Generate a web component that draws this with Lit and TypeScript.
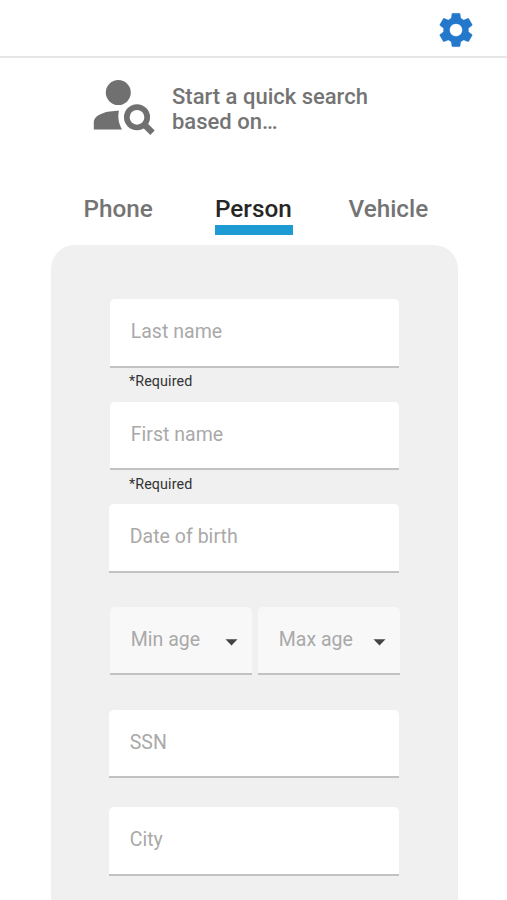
import { LitElement, html, css, svg } from "lit";
import { customElement, property } from "lit/decorators.js";
import { classMap } from "lit/directives/class-map.js";

@customElement("text-field")
class TextField extends LitElement {
  @property() label = "";
  @property() hint = "";
  @property({ type: Boolean }) select = false;

  static styles = css`
    :host { display: block; }
    .box {
      box-sizing: border-box;
      height: 68.5px;
      display: flex;
      align-items: center;
      padding: 0 14px 1px 20.7px;
      background: #fff;
      border-bottom: 2px solid #c2c2c2;
      border-radius: 5px 5px 0 0;
      color: #a9a9a9;
      font-size: 19.5px;
      letter-spacing: 0.03px;
      white-space: nowrap;
    }
    .box.select { background: #f8f8f8; justify-content: space-between; }
    .arrow { width: 13px; height: 7px; margin-top: 6px; fill: #444; }
    .hint {
      margin: 4.5px 0 1px 19px;
      font-size: 14.3px;
      line-height: 18px;
      letter-spacing: 0.1px;
      color: #333;
    }
  `;

  render() {
    return html`
      <div class=${classMap({ box: true, select: this.select })}>
        <span>${this.label}</span>
        ${this.select
          ? html`<svg class="arrow" viewBox="0 0 13 7"><path d="M0.5 0.3h12L6.5 6.5z" /></svg>`
          : ""}
      </div>
      ${this.hint ? html`<div class="hint">${this.hint}</div>` : ""}
    `;
  }
}

const gear = svg`<path d="M19.14 12.94c.04-.3.06-.61.06-.94 0-.32-.02-.64-.07-.94l2.03-1.58c.18-.14.23-.41.12-.61l-1.92-3.32c-.12-.22-.37-.29-.59-.22l-2.39.96c-.5-.38-1.03-.7-1.62-.94l-.36-2.54c-.04-.24-.24-.41-.48-.41h-3.84c-.24 0-.43.17-.47.41l-.36 2.54c-.59.24-1.13.57-1.62.94l-2.39-.96c-.22-.08-.47 0-.59.22L2.74 8.87c-.12.21-.08.47.12.61l2.03 1.58c-.05.3-.09.63-.09.94s.02.64.07.94l-2.03 1.58c-.18.14-.23.41-.12.61l1.92 3.32c.12.22.37.29.59.22l2.39-.96c.5.38 1.03.7 1.62.94l.36 2.54c.05.24.24.41.48.41h3.84c.24 0 .44-.17.47-.41l.36-2.54c.59-.24 1.13-.56 1.62-.94l2.39.96c.22.08.47 0 .59-.22l1.92-3.32c.12-.22.07-.47-.12-.61l-2.01-1.58zM12 15.6c-1.98 0-3.6-1.62-3.6-3.6s1.62-3.6 3.6-3.6 3.6 1.62 3.6 3.6-1.62 3.6-3.6 3.6z"/>`;

@customElement("app-root")
class AppRoot extends LitElement {
  static styles = css`
    :host {
      display: flex;
      flex-direction: column;
      height: 900px;
      overflow: hidden;
      background: #fff;
      font-family: Roboto, "Liberation Sans", sans-serif;
    }
    .bar {
      box-sizing: border-box;
      flex: none;
      height: 58px;
      display: flex;
      justify-content: flex-end;
      padding: 9px 30px 0 0;
      border-bottom: 2px solid #e6e6e6;
    }
    .gear {
      width: 42px;
      height: 42px;
      fill: #2478cc;
      stroke: #2478cc;
      stroke-width: 0.1;
    }
    .intro {
      box-sizing: border-box;
      flex: none;
      display: flex;
      height: 102px;
      padding: 20px 0 0 92px;
      gap: 16px;
    }
    .person { width: 64px; height: 60px; }
    .title {
      padding-top: 5.5px;
      font-size: 22px;
      font-weight: 500;
      line-height: 25.5px;
      color: #747474;
      white-space: nowrap;
    }
    .tabs {
      box-sizing: border-box;
      flex: none;
      display: grid;
      grid-template-columns: 131.5px 133.5px auto;
      justify-items: start;
      height: 84.5px;
      padding: 33px 0 0 83.5px;
      font-size: 24.3px;
      font-weight: 500;
      line-height: 32px;
      color: #747474;
    }
    .tab { height: 32px; border-bottom: 10px solid transparent; }
    .tab.active { padding-right: 1px; color: #262626; border-color: #1f9bd3; }
    .panel {
      box-sizing: border-box;
      width: 407px;
      flex: 1;
      margin: 0 0 0 51px;
      padding: 54.5px 59.5px 0 58px;
      border-radius: 24px 24px 0 0;
      background: #f0f0f0;
      overflow: hidden;
    }
    .inset { margin-left: 1px; }
    .first { margin-top: 11.5px; }
    .dob { margin-top: 11.5px; }
    .ages {
      display: grid;
      grid-template-columns: 142px 142px;
      gap: 6px;
      margin: 34px 0 34.5px 1px;
    }
    .city { margin-top: 29px; }
  `;

  render() {
    return html`
      <header class="bar"><svg class="gear" viewBox="0 0 24 24">${gear}</svg></header>
      <section class="intro">
        <svg class="person" viewBox="0 0 64 60">
          <g fill="#707070">
            <circle cx="26.3" cy="14.6" r="12.5" />
            <path d="M1.800 51.500v-6.700C1.800 36.500 14.500 32.800 27 32.800C25.600 38.500 26.300 45 30 51.500z" />
          </g>
          <g fill="none" stroke="#707070">
            <circle cx="45" cy="39.300" r="10.200" stroke-width="5.7" />
            <path d="M51.500 45.800l9 9" stroke-width="6.2" />
          </g>
        </svg>
        <div class="title">Start a quick search<br />based on…</div>
      </section>
      <nav class="tabs">
        <span class="tab">Phone</span>
        <span class="tab active">Person</span>
        <span class="tab">Vehicle</span>
      </nav>
      <main class="panel">
        <text-field class="inset" label="Last name" hint="*Required"></text-field>
        <text-field class="inset first" label="First name" hint="*Required"></text-field>
        <text-field class="dob" label="Date of birth"></text-field>
        <div class="ages">
          <text-field select label="Min age"></text-field>
          <text-field select label="Max age"></text-field>
        </div>
        <text-field label="SSN"></text-field>
        <text-field class="city" label="City"></text-field>
      </main>
    `;
  }
}
